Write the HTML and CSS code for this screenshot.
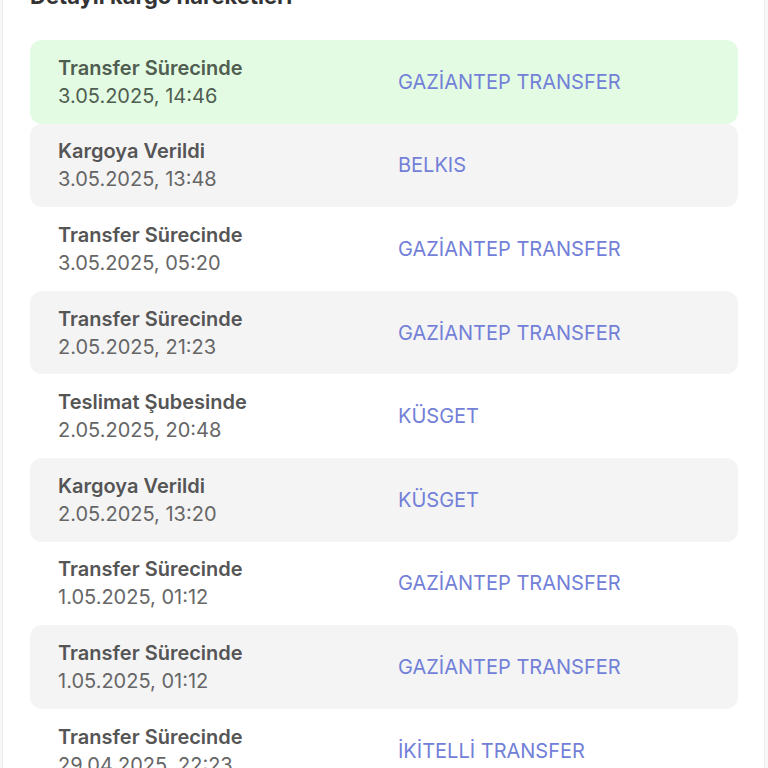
FILE: index.html
```html
<!DOCTYPE html>
<html lang="tr">
<head>
  <meta charset="UTF-8">
  <meta name="viewport" content="width=device-width, initial-scale=1.0">
  <title>Kargo Takip</title>
  <link rel="stylesheet" href="styles.css">
</head>
<body>
  <div class="card">
    <h2>Detaylı kargo hareketleri</h2>
    <div class="moves">
      <div class="move latest">
        <div class="info">
          <span class="status">Transfer Sürecinde</span>
          <span class="date">3.05.2025, 14:46</span>
        </div>
        <span class="place">GAZİANTEP TRANSFER</span>
      </div>
      <div class="move">
        <div class="info">
          <span class="status">Kargoya Verildi</span>
          <span class="date">3.05.2025, 13:48</span>
        </div>
        <span class="place">BELKIS</span>
      </div>
      <div class="move">
        <div class="info">
          <span class="status">Transfer Sürecinde</span>
          <span class="date">3.05.2025, 05:20</span>
        </div>
        <span class="place">GAZİANTEP TRANSFER</span>
      </div>
      <div class="move">
        <div class="info">
          <span class="status">Transfer Sürecinde</span>
          <span class="date">2.05.2025, 21:23</span>
        </div>
        <span class="place">GAZİANTEP TRANSFER</span>
      </div>
      <div class="move">
        <div class="info">
          <span class="status">Teslimat Şubesinde</span>
          <span class="date">2.05.2025, 20:48</span>
        </div>
        <span class="place">KÜSGET</span>
      </div>
      <div class="move">
        <div class="info">
          <span class="status">Kargoya Verildi</span>
          <span class="date">2.05.2025, 13:20</span>
        </div>
        <span class="place">KÜSGET</span>
      </div>
      <div class="move">
        <div class="info">
          <span class="status">Transfer Sürecinde</span>
          <span class="date">1.05.2025, 01:12</span>
        </div>
        <span class="place">GAZİANTEP TRANSFER</span>
      </div>
      <div class="move">
        <div class="info">
          <span class="status">Transfer Sürecinde</span>
          <span class="date">1.05.2025, 01:12</span>
        </div>
        <span class="place">GAZİANTEP TRANSFER</span>
      </div>
      <div class="move">
        <div class="info">
          <span class="status">Transfer Sürecinde</span>
          <span class="date">29.04.2025, 22:23</span>
        </div>
        <span class="place">İKİTELLİ TRANSFER</span>
      </div>
    </div>
  </div>
</body>
</html>
```

FILE: styles.css
```css
body {
  font-family: Inter, "Noto Sans", sans-serif;
  margin: 0;
  padding: 0 3px 0 2px;
  background: #f7f7f8;
  overflow: hidden;
}

.card {
  background: white;
  border: 1px solid #ececee;
  border-radius: 14px;
  padding: 20px 26px 24px 27px;
  margin-top: -40px;
}

h2 {
  font-size: 22px;
  font-weight: 700;
  line-height: 30px;
  color: #333;
  margin: 0 0 29px;
}

.move {
  display: grid;
  grid-template-columns: 340px 1fr;
  align-items: center;
  height: 83.6px;
  padding: 0 28px;
  border-radius: 12px;
}

/* every other row gets a light grey band */
.move:nth-child(even) {
  background: #f4f4f5;
}

.move.latest {
  background: #e3fbe3;
}

.move.latest .status,
.move.latest .date {
  color: #4f5e50;
}

.info {
  display: flex;
  flex-direction: column;
}

.status {
  font-size: 20px;
  font-weight: 600;
  line-height: 28px;
  color: #555;
}

.date {
  font-size: 20px;
  line-height: 28px;
  color: #666;
}

.place {
  font-size: 20px;
  color: #7280d8;
}
```
